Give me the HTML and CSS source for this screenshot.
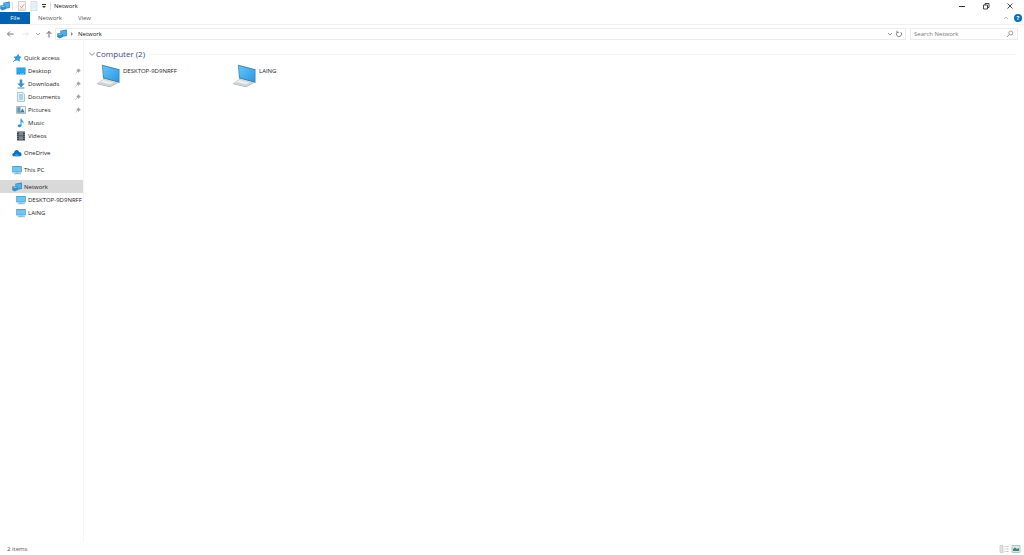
FILE: index.html
```html
<!DOCTYPE html>
<html lang="en">
<head>
<meta charset="utf-8">
<title>Network</title>
<link rel="stylesheet" href="styles.css">
</head>
<body>
<svg class="defs" aria-hidden="true">
  <defs>
    <linearGradient id="screen" x1="0" y1="0" x2="1" y2="1"><stop offset="0" stop-color="#66c4fa"/><stop offset="1" stop-color="#2b98e4"/></linearGradient>
    <symbol id="network" viewBox="0 0 10 10"><path d="M3.2 1.7 9.8.5v6.6L4 8z" fill="#2386c8"/><path d="M4 2.3 9 1.4v4.9L4.6 7z" fill="#4fb1ec"/><path d="M.2 4.6 4 3.8l2 1.2v3L2.4 9.5.2 8z" fill="#398fc4"/><path d="M.8 4.9 3.8 4.4l1.4.8-2.7.8z" fill="#8fd0f2"/></symbol>
    <symbol id="monitor" viewBox="0 0 10 10"><path d="M.3 1h9.4v6.4H.3z" fill="#3b93c6"/><path d="M1 1.7h8v5H1z" fill="#6fc6f2"/><path d="M3.6 7.4h2.8v.8H9V9.2H1.8v-1h1.8z" fill="#8fb7cd"/></symbol>
    <symbol id="pin" viewBox="0 0 6 6"><path d="M3.3.7 5.4 2.7 4.5 3 3.6 4.4 1.7 2.5 3 1.6zM2.4 3.4.6 5.4" fill="#a0a6ab" stroke="#8b9298" stroke-width=".5"/></symbol>
    <symbol id="laptop" viewBox="0 0 24 24"><path d="m6 .8 17.5 4.4V19L7 14.5z" fill="#3f86ae"/><path d="m6.9 2 15.7 4v11.6L7.7 13.5z" fill="url(#screen)"/><path d="m7.5 14.8 14 3.6-7.5 4L1 19.2z" fill="#cfd4d8"/><path d="m7.5 15.9 10 2.5-3.7 1.8-9.8-2.3z" fill="#eceeef"/><path d="m1 19.2 13 3.2 7.5-4v.8L14 23.3 1 20z" fill="#a3abb1"/></symbol>
    <symbol id="down" viewBox="0 0 6 6"><path d="m1 2 2 2 2-2" fill="none" stroke="currentColor" stroke-width=".8"/></symbol>
  </defs>
</svg>
<div class="window">
  <header class="titlebar">
    <svg class="icon"><use href="#network"/></svg>
    <span class="divider"></span>
    <button class="tool" aria-label="Properties"><svg class="icon" viewBox="0 0 10 10"><path d="M1.5.5h7v9h-7z" fill="#faf8f5" stroke="#c4bab4" stroke-width=".7"/><path d="m3 5 1.5 1.8L7.5 3" fill="none" stroke="#dfa084"/><path d="M2.5 8h5" stroke="#dfd0b9"/></svg></button>
    <button class="tool" aria-label="New folder"><svg class="icon" viewBox="0 0 10 10"><path d="M2 .5h6v9H2z" fill="#eef6fa" stroke="#bed5e2" stroke-width=".7"/><path d="M3 3h4M3 5h4M3 7h4" stroke="#cae2ee" stroke-width=".6"/></svg></button>
    <button class="more" aria-label="Customize toolbar"><svg class="mini" viewBox="0 0 6 6"><path d="M1 1h4v1H1zM1 3h4L3 5z" fill="#333"/></svg></button>
    <span class="divider"></span>
    <h1 class="title">Network</h1>
    <div class="controls">
      <button aria-label="Minimize"><svg class="ctl" viewBox="0 0 8 8"><path d="M1 4.5h6" stroke="#333"/></svg></button>
      <button aria-label="Restore"><svg class="ctl" viewBox="0 0 8 8"><path d="M1.5 3h4v4h-4zM3 3V1.5h4v4H5.5" fill="none" stroke="#333" stroke-width=".9"/></svg></button>
      <button aria-label="Close"><svg class="ctl" viewBox="0 0 8 8"><path d="m1.5 1.5 5 5m0-5-5 5" stroke="#333" stroke-width=".9"/></svg></button>
    </div>
  </header>
  <nav class="tabs" aria-label="Ribbon">
    <button class="tab file">File</button>
    <button class="tab">Network</button>
    <button class="tab">View</button>
    <button class="expand" aria-label="Expand ribbon"><svg class="mini"><use href="#down"/></svg></button>
    <button class="help" aria-label="Help">?</button>
  </nav>
  <div class="addressrow">
    <div class="history">
      <button aria-label="Back"><svg class="ctl" viewBox="0 0 8 8"><path d="M7.5 4h-6M4 1.5 1.5 4 4 6.5" fill="none" stroke="#666" stroke-width=".9"/></svg></button>
      <button aria-label="Forward"><svg class="ctl" viewBox="0 0 8 8"><path d="M.5 4h6M4 1.5 6.5 4 4 6.5" fill="none" stroke="#e4e4e4" stroke-width=".9"/></svg></button>
      <button class="recent" aria-label="Recent locations"><svg class="mini"><use href="#down"/></svg></button>
      <button aria-label="Up"><svg class="ctl" viewBox="0 0 8 8"><path d="M4 7.5v-6M1.5 4 4 1.5 6.5 4" fill="none" stroke="#555" stroke-width=".9"/></svg></button>
    </div>
    <div class="address">
      <svg class="icon"><use href="#network"/></svg>
      <svg class="tiny crumb" viewBox="0 0 4 4"><path d="m1 0 2 2-2 2z" fill="#888"/></svg>
      <a class="path" href="#">Network</a>
      <button aria-label="Previous locations"><svg class="mini"><use href="#down"/></svg></button>
      <button class="refresh" aria-label="Refresh"><svg class="ctl" viewBox="0 0 8 8"><path d="M5.8 2.2A2.6 2.6 0 1 1 2.4 2M2 .7v1.7h1.8" fill="none" stroke="#666" stroke-width=".8"/></svg></button>
    </div>
    <label class="search"><input type="search" placeholder="Search Network" aria-label="Search Network"><svg class="ctl" viewBox="0 0 8 8"><circle cx="4.8" cy="3" r="2" fill="none" stroke="#888" stroke-width=".8"/><path d="M3.4 4.4 1 7" stroke="#888" stroke-width=".9"/></svg></label>
  </div>
  <div class="body">
    <nav class="sidebar" aria-label="Folders">
      <ul>
        <li><a href="#"><svg class="icon" viewBox="0 0 10 10"><path d="m6.3.8 1 2.4 2.4.5-2 2 .2 3-2.7-1.4-2.7 1 .6-2.8L1.5 3.7l3-.4z" fill="#339bd9"/><path d="m4 6-3 3" stroke="#6c9dbd"/></svg>Quick access</a></li>
        <li class="child"><a href="#"><svg class="icon" viewBox="0 0 10 10"><path d="M.5 1.5h9v7h-9z" fill="#148cd8"/><path d="M1 2h8v4.8H1z" fill="#27a7ec"/><path d="M2 7.7h1m1 0h4" stroke="#b2e1fb" stroke-width=".6"/></svg>Desktop<svg class="pin"><use href="#pin"/></svg></a></li>
        <li class="child"><a href="#"><svg class="icon" viewBox="0 0 10 10"><path d="M3.7.6h2.6v4h2.6L5 8.3 1.1 4.6h2.6z" fill="#3c91c7"/><path d="M1.5 9h7" stroke="#3c91c7"/></svg>Downloads<svg class="pin"><use href="#pin"/></svg></a></li>
        <li class="child"><a href="#"><svg class="icon" viewBox="0 0 10 10"><path d="M1.5.5h5.5l1.5 1.7v7.3h-7z" fill="#e3f1f8" stroke="#8db4c8" stroke-width=".7"/><path d="M3 3h4M3 5h4M3 7h4" stroke="#62a8cc" stroke-width=".8"/></svg>Documents<svg class="pin"><use href="#pin"/></svg></a></li>
        <li class="child"><a href="#"><svg class="icon" viewBox="0 0 10 10"><path d="M.5 1.5h9v7h-9z" fill="#edf3f6" stroke="#89a2b0" stroke-width=".7"/><path d="M1.2 2.2h3.3v5.6H1.2z" fill="#6897b4"/><path d="m4 7.5 2.5-4 2.3 4z" fill="#3c7da3"/></svg>Pictures<svg class="pin"><use href="#pin"/></svg></a></li>
        <li class="child"><a href="#"><svg class="icon" viewBox="0 0 10 10"><path d="M5 .7v7" stroke="#2c8fcf"/><path d="M5 .5c.4 2 3.8 2.3 2 5.7C7.2 4.4 6 3.8 5 3.5z" fill="#2c9bdd"/><ellipse cx="3.6" cy="7.8" rx="1.9" ry="1.4" fill="#2c8fcf"/></svg>Music</a></li>
        <li class="child"><a href="#"><svg class="icon" viewBox="0 0 10 10"><path d="M1 .5h8v9H1z" fill="#3c454b"/><path d="M3 1h4v3.5H3zM3 5.3h4v3.5H3z" fill="#788b96"/><path d="M1.9 1v8M8.1 1v8" stroke="#c5cbd0" stroke-width=".7" stroke-dasharray="1 1"/></svg>Videos</a></li>
        <li class="group"><a href="#"><svg class="icon" viewBox="0 0 10 10"><path d="M2 8.2C-.4 8.2-.1 5 2 4.9 2.4 1.2 6.3 1 7.1 4c2.6-.1 3.5 3.9.9 4.2z" fill="#0871b9"/><path d="M3 8.2c-.7-2.5 2-3.4 3.2-2L8 8.2z" fill="#1e9be4"/></svg>OneDrive</a></li>
        <li class="group"><a href="#"><svg class="icon"><use href="#monitor"/></svg>This PC</a></li>
        <li class="group"><a href="#" class="selected" aria-current="page"><svg class="icon"><use href="#network"/></svg>Network</a></li>
        <li class="child"><a href="#"><svg class="icon"><use href="#monitor"/></svg>DESKTOP-9D9NRFF</a></li>
        <li class="child"><a href="#"><svg class="icon"><use href="#monitor"/></svg>LAING</a></li>
      </ul>
    </nav>
    <main class="content">
      <h2 class="heading"><svg class="ctl"><use href="#down"/></svg>Computer (2)</h2>
      <div class="items">
        <a href="#" class="item"><svg class="laptop"><use href="#laptop"/></svg><span>DESKTOP-9D9NRFF</span></a>
        <a href="#" class="item"><svg class="laptop"><use href="#laptop"/></svg><span>LAING</span></a>
      </div>
    </main>
  </div>
  <footer class="status">
    <span>2 items</span>
    <div class="views">
      <button aria-label="Details view"><svg class="icon" viewBox="0 0 10 10"><path d="M1 1.5h3v7H1z" fill="#e4e4e4" stroke="#bbb" stroke-width=".6"/><path d="M5.5 2.5h1m1 0h2M5.5 5h1m1 0h2m-4 2.5h1m1 0h2" stroke="#aaa" stroke-width=".8"/></svg></button>
      <button aria-label="Large icons view"><svg class="icon" viewBox="0 0 10 10"><path d="M1 1.5h8v7H1z" fill="#d5ebe6" stroke="#9fc0bf" stroke-width=".8"/><path d="M2 7V5l2-1.5L6 5l2-1v3z" fill="#4b7f79"/></svg></button>
    </div>
  </footer>
</div>
</body>
</html>
```
FILE: styles.css
```css
* { box-sizing: border-box; }
body { margin: 0; background: #fff; color: #222; font: 6px/8px "Open Sans", "Noto Sans", sans-serif; }
button { display: flex; align-items: center; justify-content: center; margin: 0; padding: 0; border: 0; background: none; color: inherit; font: inherit; }
a { color: inherit; text-decoration: none; }
ul { margin: 0; padding: 0; list-style: none; }
svg { display: block; flex: none; }
.defs { position: absolute; width: 0; height: 0; }
.icon { width: 10px; height: 10px; }
.ctl { width: 8px; height: 8px; }
.mini { width: 6px; height: 6px; }
.tiny { width: 4px; height: 4px; }
.window { display: flex; flex-direction: column; min-height: 100vh; }

.titlebar { display: flex; align-items: center; height: 12px; }
.titlebar > .icon { margin-right: 2px; }
.divider { width: 1px; height: 8px; background: #ddd; }
.tool { margin-left: 2px; }
.divider + .tool { margin-left: 4px; }
.more { margin: 0 3px 0 2px; }
.title { margin: 0 0 0 3px; font-size: 6px; font-weight: 400; color: #111; }
.controls { display: flex; gap: 16px; margin-left: auto; padding-right: 10px; }

.tabs { display: flex; align-items: stretch; height: 13px; border-bottom: 1px solid #f1f1f1; color: #555; }
.tab { padding: 0 8px; }
.file { width: 30px; background: #0063b1; color: #fff; }
.expand { margin-left: auto; color: #aaa; transform: rotate(180deg); }
.help { align-self: center; width: 8px; height: 8px; margin: 0 2px 0 5px; border-radius: 50%; background: #0870b8; color: #fff; font-weight: 700; }

.addressrow { display: flex; gap: 4px; padding: 3px 6px 0; }
.history { display: flex; align-items: center; gap: 8px; width: 45px; }
.recent { margin: 0 -4px 0 -3px; color: #888; }
.address { display: flex; align-items: center; flex: 1; height: 12px; border: 1px solid #ececec; padding-left: 1px; }
.crumb { margin: 0 4px 0 3px; }
.path { margin-right: auto; color: #111; }
.address button { color: #777; }
.address .refresh { margin: 0 2px; }
.search { display: flex; align-items: center; width: 108px; height: 12px; padding: 0 3px; border: 1px solid #ececec; }
.search input { flex: 1; min-width: 0; padding: 0; border: 0; outline: 0; background: none; color: #555; font: inherit; }
.search input::placeholder { color: #777; opacity: 1; }

.body { display: flex; flex: 1; }
.sidebar { width: 84px; padding-top: 11px; border-right: 1px solid #f5f5f5; }
.sidebar a { display: flex; align-items: center; gap: 2px; height: 13px; padding-left: 12px; white-space: nowrap; }
.sidebar .child a { padding-left: 16px; }
.group { margin-top: 4px; }
.sidebar .selected { background: #d9d9d9; }
.pin { width: 6px; height: 6px; margin: 0 2px 0 auto; }
.content { flex: 1; padding: 8px 8px 0 4px; }
.heading { display: flex; align-items: center; margin: 0; color: #3d4480; font-size: 8px; line-height: 12px; font-weight: 400; }
.heading .ctl { color: #aaa; }
.heading::after { content: ""; flex: 1; height: 1px; margin-left: 4px; background: #f5f5f5; }
.items { display: flex; gap: 16px; padding: 4px 8px; }
.item { display: flex; gap: 3px; width: 120px; }
.item span { padding-top: 3px; }
.laptop { width: 24px; height: 24px; }

.status { display: flex; align-items: center; justify-content: space-between; height: 13px; padding: 0 3px 0 7px; color: #555; }
.views { display: flex; gap: 2px; }
```
